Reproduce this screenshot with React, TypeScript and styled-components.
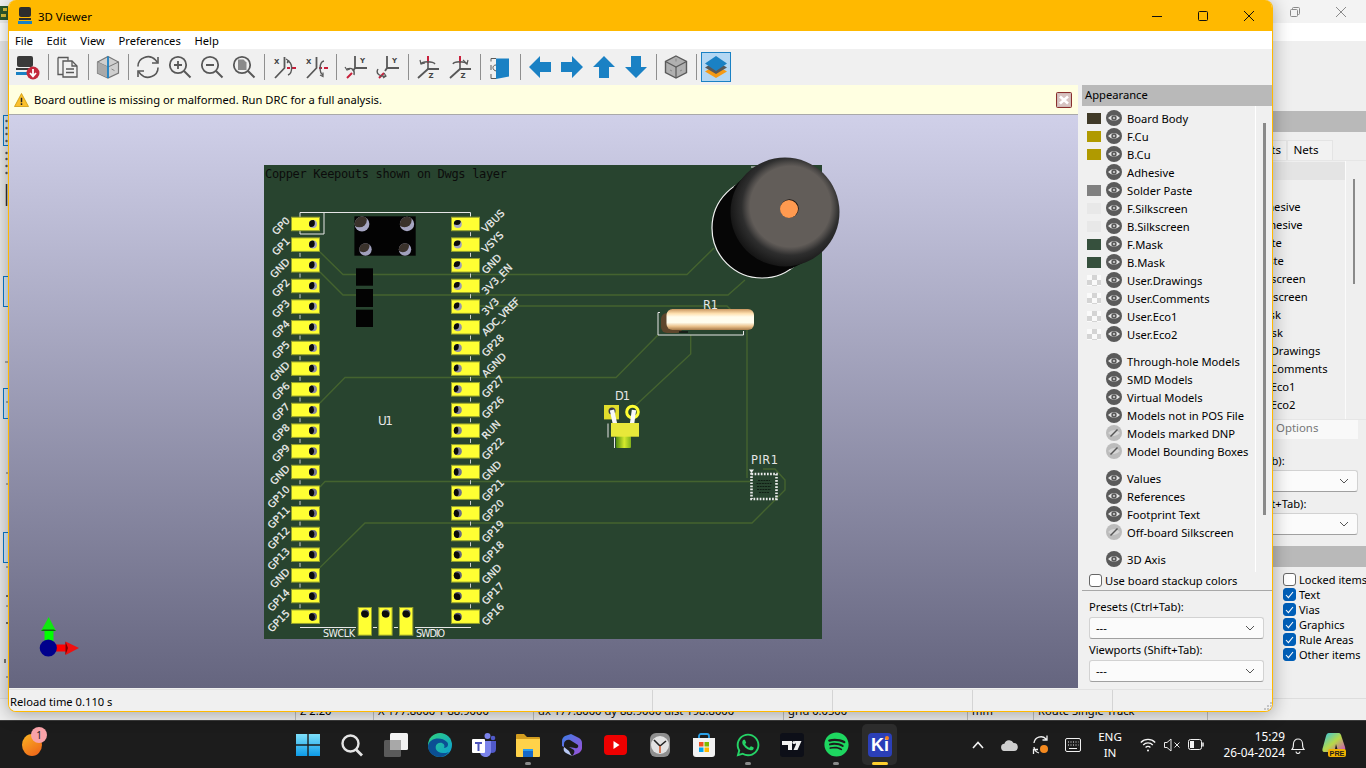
import React from "react";
import styled, { createGlobalStyle } from "styled-components";
import { FaWhatsapp, FaSpotify } from "react-icons/fa";

const UI = `"Noto Sans", "Open Sans", "Liberation Sans", sans-serif`;

const Global = createGlobalStyle`
  html, body { margin: 0; padding: 0; overflow: hidden; background: #f0f0f0; }
  * { box-sizing: border-box; }
  svg { display: block; }
`;

const Desktop = styled.div`
  position: relative;
  width: 1366px;
  height: 768px;
  display: flex;
  flex-direction: column;
  font-family: ${UI};
  font-size: 11.2px;
  color: #000;
  overflow: hidden;
`;

/* ---------- window behind ---------- */
const BackWindow = styled.div`
  height: 720px;
  display: flex;
  flex-direction: column;
  background: #efefef;
  overflow: hidden;
`;
const BackTitle = styled.div`
  height: 23px;
  flex: none;
  background: #f3f3f3;
  display: flex;
  align-items: center;
  justify-content: space-between;
`;
const BackCaps = styled.div`
  display: flex;
  align-items: center;
  gap: 36px;
  padding-right: 20px;
`;
const BackMenu = styled.div`
  height: 18px;
  flex: none;
  background: #fff;
`;
const BackBody = styled.div`
  flex: 1;
  min-height: 0;
  display: flex;
`;
const BackStrip = styled.div`
  position: relative;
  width: 28px;
  padding: 74px 0 0 3px;
  background: #e9e9e9;
`;
const StripMarks = styled.svg`
  position: absolute;
  left: 0;
  top: 0;
`;
const StripToggle = styled.div<{ $top: number }>`
  width: 30px;
  height: 31px;
  margin-top: ${(p) => p.$top}px;
  border: 1px solid #0f78c8;
  background: #d6e8f6;
`;
const BackCentre = styled.div`
  flex: 1;
`;
const BackPanel = styled.div`
  width: 200px;
  display: flex;
  flex-direction: column;
`;
const BackHeader = styled.div<{ $top: number }>`
  height: 21px;
  flex: none;
  margin-top: ${(p) => p.$top}px;
  background: #b9b9b9;
`;
const TabRow = styled.div`
  height: 20px;
  margin-top: 8px;
  padding-left: 64px;
  display: flex;
`;
const Tab = styled.div<{ $w: number; $dx: number }>`
  width: ${(p) => p.$w}px;
  height: 20px;
  border: 1px solid #e4e4e4;
  border-bottom: 0;
  background: #f2f2f2;
  font-size: 11.6px;
  line-height: 18px;
  text-align: center;
  text-indent: ${(p) => p.$dx}px;
`;
const LayerFrame = styled.div`
  height: 260px;
  display: flex;
  border: 1px solid #e6e6e6;
  border-right: 0;
  margin-left: 40px;
`;
const LayerList = styled.div`
  width: 139px;
  border-right: 1px solid #fbfbfb;
  padding-top: 1px;
`;
const LayerRow = styled.div<{ $on?: boolean }>`
  height: 18px;
  line-height: 18px;
  padding-left: 38px;
  background: ${(p) => (p.$on ? "#e4e4e4" : "transparent")};
`;
const LayerTrack = styled.div`
  flex: 1;
  padding: 18px 0 0 7px;
`;
const LayerThumb = styled.div`
  width: 2px;
  height: 105px;
  background: #8a8a8a;
`;
const OptionsRow = styled.div`
  height: 19px;
  margin: 0 8px 0 106px;
  background: #f9f9f9;
  color: #777;
  line-height: 16px;
  font-size: 11.4px;
  padding-left: 4px;
`;
const BackLabel = styled.div<{ $x: number; $top: number }>`
  height: 16px;
  margin-top: ${(p) => p.$top}px;
  margin-left: ${(p) => p.$x}px;
  line-height: 16px;
  white-space: nowrap;
`;
const SelectBox = styled.div<{ $back?: boolean }>`
  height: 22px;
  background: #fbfbfb;
  border: 1px solid #d2d2d2;
  border-bottom-color: #a0a0a0;
  border-radius: 3px;
  margin: ${(p) => (p.$back ? "1px 8px 0 14px" : "2px 0 0 0")};
  padding: 0 8px 0 6px;
  display: flex;
  align-items: center;
  justify-content: ${(p) => (p.$back ? "flex-end" : "space-between")};
  line-height: 20px;
`;
const CheckGrid = styled.div`
  padding: 5px 0 0 117px;
`;
const CheckRow = styled.div`
  height: 15px;
  display: flex;
  align-items: center;
  gap: 3px;
  font-size: 11px;
  white-space: nowrap;
`;
const Check = styled.div<{ $on?: boolean }>`
  width: 13px;
  height: 13px;
  flex: none;
  border-radius: 3px;
  border: 1px solid ${(p) => (p.$on ? "#005fb8" : "#666")};
  background: ${(p) => (p.$on ? "#005fb8" : "#fff")};
  display: flex;
  align-items: center;
  justify-content: center;
`;
const BackStatus = styled.div`
  height: 22px;
  flex: none;
  display: flex;
  background: #efefef;
  border-top: 1px solid #ddd;
`;
const BackCell = styled.div<{ $w: number }>`
  width: ${(p) => p.$w}px;
  flex: none;
  border-right: 1px solid #bdbdbd;
  padding-left: 4px;
  line-height: 23px;
  white-space: nowrap;
  overflow: hidden;
`;

/* ---------- 3D viewer window ---------- */
const Win = styled.div`
  position: absolute;
  left: 8px;
  top: 0;
  width: 1265px;
  height: 712px;
  display: flex;
  flex-direction: column;
  border: 1px solid #ffb900;
  border-width: 0 1px 1px 1px;
  border-radius: 8px;
  overflow: hidden;
  background: #f0f0f0;
  box-shadow: 0 2px 18px rgba(0, 0, 0, 0.32);
`;
const TitleBar = styled.div`
  height: 31px;
  flex: none;
  background: #ffb900;
  display: flex;
  align-items: center;
  padding-left: 8px;
`;
const TitleText = styled.div`
  margin-left: 5px;
  padding-top: 1px;
  font-size: 11.4px;
  flex: 1;
`;
const Caption = styled.div`
  width: 46px;
  height: 31px;
  display: flex;
  align-items: center;
  justify-content: center;
`;
const CaptionRow = styled.div`
  display: flex;
`;
const MenuBar = styled.div`
  height: 18px;
  flex: none;
  background: #fff;
  padding-top: 1px;
  display: flex;
  align-items: center;
`;
const MenuItem = styled.div`
  padding: 0 7.7px 0 6px;
  line-height: 17px;
`;
const ToolBar = styled.div`
  height: 36px;
  flex: none;
  background: #f0f0f0;
  padding-left: 3px;
  display: flex;
  align-items: center;
`;
const ToolBtn = styled.div<{ $on?: boolean }>`
  width: 30px;
  height: 30px;
  margin: 0 1px;
  display: flex;
  align-items: center;
  justify-content: center;
  border: 1px solid ${(p) => (p.$on ? "#1a81c4" : "transparent")};
  background: ${(p) => (p.$on ? "#b3d7f3" : "transparent")};
`;
const ToolSep = styled.div`
  width: 8px;
  height: 26px;
  flex: none;
  display: flex;
  justify-content: center;
  &::before {
    content: "";
    width: 1px;
    height: 100%;
    background: #8f8f8f;
  }
`;
const Body = styled.div`
  flex: 1;
  min-height: 0;
  display: flex;
`;
const Main = styled.div`
  width: 1069px;
  display: flex;
  flex-direction: column;
  padding-bottom: 1px;
`;
const InfoBar = styled.div`
  height: 30px;
  flex: none;
  background: #ffffe1;
  border-bottom: 1px solid #a9a9a9;
  display: flex;
  align-items: center;
  padding: 0 6px 0 5px;
  gap: 5px;
`;
const InfoText = styled.div`
  flex: 1;
`;
const Canvas = styled.div`
  flex: 1;
  min-height: 0;
  background: linear-gradient(#d0d0e9, #65657f);
`;
const Panel = styled.div`
  width: 190px;
  margin-left: 4px;
  display: flex;
  flex-direction: column;
`;
const PanelHead = styled.div`
  height: 21px;
  flex: none;
  background: #b9b9b9;
  padding-left: 3px;
  line-height: 20px;
`;
const PanelScroll = styled.div`
  flex: 1;
  min-height: 0;
  display: flex;
`;
const RowList = styled.div`
  width: 174px;
  padding-top: 3px;
  border-right: 1px solid #fff;
  overflow: hidden;
`;
const RowGap = styled.div`
  height: 9px;
`;
const Row = styled.div`
  height: 18px;
  display: flex;
  align-items: center;
  padding-left: 5px;
  white-space: nowrap;
`;
const Swatch = styled.div<{ $fill?: string; $checker?: boolean }>`
  width: 14px;
  height: 11px;
  flex: none;
  margin-right: 5px;
  background: ${(p) =>
    p.$checker
      ? "repeating-conic-gradient(#d4d4d4 0 25%, #fafafa 0 50%) 0 0 / 10px 10px"
      : p.$fill || "transparent"};
`;
const RowLabel = styled.div`
  margin-left: 5px;
`;
const ScrollTrack = styled.div`
  flex: 1;
  padding: 17px 0 0 7px;
`;
const ScrollThumb = styled.div`
  width: 2.5px;
  height: 392px;
  background: #8a8a8a;
`;
const StackRow = styled.div`
  height: 19px;
  flex: none;
  border-bottom: 1px solid #a8a8a8;
  display: flex;
  align-items: center;
  gap: 3px;
  padding: 0 0 1px 7px;
`;
const Footer = styled.div`
  height: 98px;
  flex: none;
  padding: 8px 8px 0 7px;
`;
const FootLabel = styled.div<{ $top?: number }>`
  height: 16px;
  margin-top: ${(p) => p.$top || 0}px;
  line-height: 16px;
`;
const StatusBar = styled.div`
  height: 22px;
  flex: none;
  display: flex;
  background: #f0f0f0;
  border-top: 1px solid #e2e2e2;
`;
const StatusCell = styled.div<{ $w: number }>`
  width: ${(p) => p.$w}px;
  flex: none;
  border-right: 1px solid #d4d4d4;
  padding-left: 1px;
  line-height: 24px;
`;
const Grip = styled.svg`
  position: absolute;
  right: 0;
  bottom: 1px;
`;

/* ---------- taskbar ---------- */
const TaskBar = styled.div`
  height: 48px;
  flex: none;
  background: #1c1c1c;
  border-top: 1px solid #3c3c3c;
  display: flex;
  align-items: center;
  color: #fff;
`;
const WidgetSlot = styled.div`
  position: relative;
  width: 286px;
  height: 47px;
  flex: none;
  padding: 13px 0 0 22px;
`;
const Badge = styled.div`
  position: absolute;
  left: 31px;
  top: 6px;
  width: 16px;
  height: 16px;
  border-radius: 50%;
  background: #f9a2a8;
  color: #1c1c1c;
  font-size: 10px;
  line-height: 16px;
  text-align: center;
`;
const AppBtn = styled.div<{ $active?: boolean }>`
  position: relative;
  width: 44px;
  height: 47px;
  flex: none;
  display: flex;
  align-items: center;
  justify-content: center;
  &::before {
    content: "";
    display: ${(p) => (p.$active ? "block" : "none")};
    position: absolute;
    left: 4px;
    top: 3px;
    width: 35px;
    height: 41px;
    border-radius: 5px;
    background: #2c2c2c;
  }
  & > * {
    position: relative;
  }
`;
const RunDot = styled.div<{ $active?: boolean }>`
  position: absolute !important;
  bottom: 3px;
  left: 50%;
  transform: translateX(-50%);
  width: ${(p) => (p.$active ? 16 : 6)}px;
  height: 3px;
  border-radius: 2px;
  background: ${(p) => (p.$active ? "#ffd02e" : "#8a8a8a")};
`;
const KiTile = styled.div`
  width: 24px;
  height: 24px;
  border-radius: 4px;
  background: #2b3fb8;
  color: #fff;
  font: 700 18px/24px "Liberation Sans", sans-serif;
  text-align: center;
  &::after {
    content: "";
    position: absolute;
    right: 3px;
    top: 3px;
    width: 4px;
    height: 4px;
    border-radius: 50%;
    background: #f58220;
  }
`;
const Tray = styled.div`
  margin-left: auto;
  display: flex;
  align-items: center;
  padding-right: 10px;
`;
const TrayCell = styled.div<{ $w: number }>`
  width: ${(p) => p.$w}px;
  height: 47px;
  flex: none;
  display: flex;
  align-items: center;
  justify-content: center;
`;
const TrayLang = styled.div`
  width: 40px;
  margin: 0 6px 0 2px;
  text-align: center;
  font-size: 11.6px;
  line-height: 16px;
`;
const TrayClock = styled.div`
  width: 77px;
  padding-bottom: 2px;
  text-align: right;
  font-size: 11.8px;
  line-height: 16px;
`;

/* ---------- icons ---------- */
const GR = "#585858";
const BL = "#1a81c4";
const RD = "#c8203c";

const TitleIcon = () => (
  <svg width="16" height="20" viewBox="0 0 16 20">
    <rect x="2" y="1" width="12" height="10" rx="2" fill="#2d2d2d" />
    <rect x="2" y="12" width="12" height="2" fill="#2d2d2d" />
    <rect x="1" y="15" width="14" height="3" fill="#1a81c4" />
  </svg>
);
const ExportIcon = () => (
  <svg width="26" height="26" viewBox="0 0 26 26">
    <rect x="2" y="2" width="16" height="11" rx="2" fill="#3a3a3a" />
    <rect x="1" y="14" width="17" height="2" fill="#3a3a3a" />
    <rect x="1" y="18" width="17" height="3" fill={BL} />
    <circle cx="18" cy="19" r="6.5" fill="#c4283c" />
    <path d="M18 15v7M15 19l3 3.4 3-3.4" stroke="#fff" strokeWidth="1.8" fill="none" />
  </svg>
);
const CopyIcon = () => (
  <svg width="24" height="24" viewBox="0 0 24 24" fill="none" stroke={GR} strokeWidth="1.3">
    <path d="M2 2.5h10v3M2 2.5v17h5" />
    <path fill="#f0f0f0" d="M7 6h9l5 5v11H7z" />
    <path d="M16 6v5h5M10 14h8M10 17.5h8" />
  </svg>
);
const BoxIcon = () => (
  <svg width="24" height="24" viewBox="0 0 24 24">
    <path d="M12 1.5l10.5 5.5v11L12 23 1.5 18V7z" fill="#cfcfcf" stroke="#777" strokeWidth="1.2" />
    <path d="M1.5 7L12 12 22.5 7" fill="none" stroke="#777" />
    <path d="M1.5 7L12 12v11L1.5 18z" fill="#a9a9a9" />
    <path d="M12 1.5V23" stroke={BL} strokeWidth="1.8" />
    <path d="M15.5 14l3 1.6" stroke="#888" />
  </svg>
);
const RefreshIcon = () => (
  <svg width="24" height="24" viewBox="0 0 24 24" fill="none" stroke={GR} strokeWidth="1.6">
    <path d="M2 11.5A10 9.5 0 0 1 19.5 5l2 2.5" />
    <path d="M22 2v6h-6" />
    <path d="M22 12.5A10 9.5 0 0 1 4.5 19l-2-2.5" />
    <path d="M2 22v-6h6" />
  </svg>
);
const Lens = ({ children }: { children?: React.ReactNode }) => (
  <svg width="24" height="24" viewBox="0 0 24 24" fill="none" stroke={GR} strokeWidth="1.8">
    <circle cx="10" cy="10" r="8.2" />
    <path d="M16 16l6.5 6.5" strokeWidth="2" />
    {children}
  </svg>
);
const ZoomInIcon = () => (
  <Lens>
    <path d="M6 10h8M10 6v8" />
  </Lens>
);
const ZoomOutIcon = () => (
  <Lens>
    <path d="M6 10h8" />
  </Lens>
);
const ZoomFitIcon = () => (
  <Lens>
    <path d="M6 4.5h5.5l3 3V15H6z" fill="#8a8a8a" stroke="none" />
  </Lens>
);
const AxisLabel = ({ x, y, t }: { x: number; y: number; t: string }) => (
  <text x={x} y={y} fontFamily="DejaVu Sans, sans-serif" fontSize="7" fontWeight="700" fill="#444">
    {t}
  </text>
);
const RotXIcon = ({ flip }: { flip?: boolean }) => (
  <svg width="24" height="24" viewBox="0 0 24 24" fill="none">
    <AxisLabel x={2} y={9} t="X" />
    <path d="M12.5 2v11L3 23" stroke={GR} strokeWidth="1.8" />
    <path d="M15 13h3M20 13h4" stroke={RD} strokeWidth="1.8" />
    <path
      d={flip ? "M20 6C15 7 15 18 19 20" : "M15 6c6 1 6 12 1 14"}
      stroke={GR}
      strokeWidth="1.4"
    />
    <path d={flip ? "M16 20l3 1.5V17.5" : "M14 4l3 2-2 2"} stroke={GR} strokeWidth="1.2" />
  </svg>
);
const RotYIcon = ({ flip }: { flip?: boolean }) => (
  <svg width="24" height="24" viewBox="0 0 24 24" fill="none">
    <AxisLabel x={16} y={8} t="Y" />
    <path d="M11 1v12h12" stroke={GR} strokeWidth="1.8" />
    <path d="M11 13l-2 3" stroke={GR} strokeWidth="1.8" />
    <path d="M8 18l-5 5" stroke={RD} strokeWidth="2" />
    <path
      d={flip ? "M2 14c-3 5 3 8 8 7" : "M3 14c5-2 8 1 7 6"}
      stroke={GR}
      strokeWidth="1.4"
    />
    <path d={flip ? "M8 18l2 3-3 2" : "M1 12l2 3 3-1"} stroke={GR} strokeWidth="1.2" />
  </svg>
);
const RotZIcon = ({ flip }: { flip?: boolean }) => (
  <svg width="24" height="24" viewBox="0 0 24 24" fill="none">
    <path d="M12 1v7" stroke={RD} strokeWidth="2" />
    <path d="M5 9c1-3 12-3 14 0" stroke={GR} strokeWidth="1.4" />
    <path d={flip ? "M15 5l4 4 1-4" : "M4 5l1 4 4-1"} stroke={GR} strokeWidth="1.2" />
    <path d="M12 8v6" stroke={GR} strokeWidth="1.6" />
    <path d="M2 23l10-9h11" stroke={GR} strokeWidth="1.8" />
    <AxisLabel x={12.5} y={22.5} t="Z" />
  </svg>
);
const OrthoIcon = () => (
  <svg width="24" height="24" viewBox="0 0 24 24" fill="none">
    <path d="M3 3.5h5M3 3.5v3M3 10v5M3 19v4.5h5" stroke={GR} />
    <path d="M8 10c-3 0-4 3-2 5l2 1" stroke={GR} />
    <path d="M8 3.5h13v18L8 24z" fill={BL} />
  </svg>
);
const Arrow = ({ r }: { r: number }) => (
  <svg width="24" height="24" viewBox="0 0 24 24">
    <path transform={`rotate(${r} 12 12)`} d="M12 1L23 12H17V23H7V12H1z" fill={BL} />
  </svg>
);
const CubeIcon = () => (
  <svg width="24" height="24" viewBox="0 0 24 24">
    <path d="M12 1l10.5 5.5v11L12 23 1.5 17.5v-11z" fill="#b0b0b0" stroke="#5a5a5a" strokeWidth="1.4" />
    <path d="M1.5 6.5L12 12l10.5-5.5" fill="none" stroke="#5a5a5a" strokeWidth="1.2" />
    <path d="M12 12v11" stroke="#5a5a5a" strokeWidth="1.2" />
    <path d="M12 3.5v3M6 15l2 1M18 15l-2 1" stroke="#888" />
  </svg>
);
const LayersIcon = () => (
  <svg width="24" height="24" viewBox="0 0 24 24">
    <path d="M12 10l11 6.5L12 23 1 16.5z" fill="#f59a14" />
    <path d="M12 6l11 6.5L12 19 1 12.5z" fill="#585858" />
    <path d="M12 1l11 7.5L12 16 1 8.5z" fill={BL} />
  </svg>
);
const Eye = ({ off }: { off?: boolean }) => (
  <svg width="16" height="16" viewBox="0 0 16 16">
    <circle cx="8" cy="8" r="8" fill={off ? "#bcbcbc" : "#5a5a5a"} />
    <path d="M2 8Q8 2.2 14 8 8 13.8 2 8z" fill={off ? "#d6d6d6" : "#e6e6e6"} />
    {off ? (
      <path d="M4.5 11.5l7-7" stroke="#555" strokeWidth="1.5" />
    ) : (
      <>
        <circle cx="8" cy="8" r="2.7" fill="#5a5a5a" />
        <circle cx="8" cy="8" r="1.1" fill="#cfcfcf" />
      </>
    )}
  </svg>
);
const Chevron = () => (
  <svg width="10" height="6" viewBox="0 0 10 6" fill="none" stroke="#555">
    <path d="M1 1l4 4 4-4" />
  </svg>
);
const CheckMark = () => (
  <svg width="9" height="8" viewBox="0 0 9 8" fill="none" stroke="#fff" strokeWidth="1.1">
    <path d="M1 4l2.4 2.6L8 1" />
  </svg>
);

/* ---------- 3D scene ---------- */
const LEFT = ["GP0","GP1","GND","GP2","GP3","GP4","GP5","GND","GP6","GP7","GP8","GP9","GND","GP10","GP11","GP12","GP13","GND","GP14","GP15"];
const RIGHT = ["VBUS","VSYS","GND","3V3_EN","3V3","ADC_VREF","GP28","AGND","GP27","GP26","RUN","GP22","GND","GP21","GP20","GP19","GP18","GND","GP17","GP16"];
const PITCH = 20.67;
const rowY = (i: number) => 216.7 + i * PITCH;
const wallShade = (y: number) => {
  const t = Math.min(1, Math.max(0, (y - 165) / 474));
  const c = (a: number, b: number) => Math.round(a + (b - a) * t);
  return `rgb(${c(178, 84)},${c(178, 84)},${c(206, 108)})`;
};
const Hole = ({
  id, x, y, dx, dy, r = 4, ink = "#0b0b0b",
}: { id: string; x: number; y: number; dx: number; dy: number; r?: number; ink?: string }) => (
  <g>
    <clipPath id={id}>
      <circle cx={x} cy={y} r={r} />
    </clipPath>
    <circle cx={x} cy={y} r={r} fill={wallShade(y)} />
    <circle cx={x + dx} cy={y + dy} r={r} fill={ink} clipPath={`url(#${id})`} />
  </g>
);
const Pad = ({ x, y, w, h }: { x: number; y: number; w: number; h: number }) => (
  <rect x={x + 0.5} y={y + 0.5} width={w - 1} height={h - 1} fill="#ffff33" stroke="#94a02e" />
);
const SILK = "#e6e6e6";
const TRACE = "#44632f";
const TRACES = [
  "320,252 343,274.5 687,274.5 714,248",
  "320,272 343,295 728,295 745,280",
  "480,306 727,306 747,326 747,478",
  "320,403 345,377.5 616,377.5 658,335",
  "636,405 690.7,354 690.7,335",
  "320,487 325,481.5 750,481.5",
  "320,567.5 365,523 752,523 785,490 785,480 775,469 763,469",
];
const labelFont = "DejaVu Sans, sans-serif";
const LABEL = "#f0f0f0";

const Scene = () => (
  <svg width="1069" height="573" viewBox="9 115 1069 573">
    <defs>
      <radialGradient id="capTop" cx="0.55" cy="0.45" r="0.56">
        <stop offset="0" stopColor="#625d59" />
        <stop offset="0.66" stopColor="#625d59" />
        <stop offset="0.72" stopColor="#4d4a48" />
        <stop offset="0.8" stopColor="#2e2e2e" />
        <stop offset="1" stopColor="#161616" />
      </radialGradient>
      <linearGradient id="resBody" x1="0" y1="0" x2="0" y2="1">
        <stop offset="0" stopColor="#c9965f" />
        <stop offset="0.22" stopColor="#ffe2b2" />
        <stop offset="0.38" stopColor="#fffdee" />
        <stop offset="0.64" stopColor="#fffdee" />
        <stop offset="0.82" stopColor="#ecc48f" />
        <stop offset="1" stopColor="#a87a48" />
      </linearGradient>
      <linearGradient id="ledFoot" x1="0" y1="0" x2="1" y2="0">
        <stop offset="0" stopColor="#4e8a10" />
        <stop offset="0.55" stopColor="#d6ea2c" />
        <stop offset="1" stopColor="#7fb01c" />
      </linearGradient>
    </defs>

    <rect x="264" y="165" width="558" height="474" fill="#28442f" />
    <text x="265" y="177.5" fontFamily="DejaVu Sans Mono, monospace" fontSize="12" fill="#0c0c0c" textLength="242">
      Copper Keepouts shown on Dwgs layer
    </text>

    {TRACES.map((t) => (
      <polyline key={t} points={t} fill="none" stroke={TRACE} strokeWidth="1.4" />
    ))}

    <path d="M300 230v-17.5h170.5v4" fill="none" stroke={SILK} strokeWidth="1" />
    <path d="M324 212.5v21.5h-24v-4" fill="none" stroke={SILK} strokeWidth="1" />
    {LEFT.slice(0, 19).map((_, i) => (
      <g key={i} stroke="#cfcfcf">
        {i > 0 && <path d={`M300 ${rowY(i) + 15.5}v4`} />}
        <path d={`M470.5 ${rowY(i) + 15.5}v4`} />
      </g>
    ))}
    <path d="M300 627.5h56M415 627.5h56M373 627.5h4M394 627.5h4" stroke={SILK} />

    {LEFT.map((n, i) => {
      const y = rowY(i);
      const t = i / 19;
      return (
        <g key={`l${i}`}>
          <Pad x={291} y={y} w={29} h={14.5} />
          <Hole id={`hl${i}`} x={313} y={y + 7.2} dx={-2.1 - Math.sin(t * Math.PI) * 0.9} dy={-1 + 1.6 * t} />
          <text
            x={290.5}
            y={y + 4.5}
            transform={`rotate(-45 290.5 ${y + 4.5})`}
            textAnchor="end"
            fontFamily={labelFont}
            fontSize="10"
            fill={LABEL}
            stroke={LABEL}
            strokeWidth="0.2"
          >
            {n}
          </text>
        </g>
      );
    })}
    {RIGHT.map((n, i) => {
      const y = rowY(i);
      const t = i / 19;
      return (
        <g key={`r${i}`}>
          <Pad x={451} y={y} w={29} h={14.5} />
          <Hole
            id={`hr${i}`}
            x={457.8}
            y={y + 7.2}
            dx={-1 - Math.sin(t * Math.PI) * 2.4}
            dy={-2.8 + 4.4 * t}
          />
          <text
            x={486}
            y={y + 16.5}
            transform={`rotate(-45 486 ${y + 16.5})`}
            fontFamily={labelFont}
            fontSize="10"
            fill={LABEL}
            stroke={LABEL}
            strokeWidth="0.2"
            textLength={n === "ADC_VREF" ? 49 : undefined}
          >
            {n}
          </text>
        </g>
      );
    })}

    {[357.7, 378.3, 399].map((x, i) => (
      <g key={x}>
        <Pad x={x} y={607} w={14.3} h={28.7} />
        <Hole id={`sw${i}`} x={x + 7.5} y={613.5} dx={-0.6} dy={1.2} />
      </g>
    ))}
    <text x="323" y="636.5" fontFamily={labelFont} fontSize="9.6" fill={LABEL} textLength="32">SWCLK</text>
    <text x="416" y="636.5" fontFamily={labelFont} fontSize="9.6" fill={LABEL} textLength="29">SWDIO</text>
    <text x="378" y="424.5" fontFamily={labelFont} fontSize="12" fill="#e6e6e6" textLength="15">U1</text>

    <rect x="354.4" y="216.3" width="61.3" height="39.4" fill="#030303" />
    {[
      [362, 224, 7.4],
      [407, 224, 7.2],
      [365.5, 249.5, 6.2],
      [405, 249.5, 6.2],
    ].map(([x, y, r], i) => (
      <Hole key={i} id={`kh${i}`} x={x} y={y} r={r} dx={-r * 0.35} dy={-r * 0.55} ink="#3a322b" />
    ))}
    <rect x="356" y="268.3" width="17" height="17.4" fill="#030303" />
    <rect x="356" y="289" width="17" height="18" fill="#030303" />
    <rect x="356" y="309.7" width="17" height="17.3" fill="#030303" />

    {/* R1 */}
    <text x="703" y="309" fontFamily={labelFont} fontSize="11.4" fill="#e6e6e6" textLength="15">R1</text>
    <path d="M660 312.5h-2v22.5h85.5v-4" fill="none" stroke={SILK} />
    <rect x="661" y="313" width="22" height="20" rx="6" fill="#5e462c" />
    <path d="M679 332h9" stroke="#111" strokeWidth="1.4" />
    <rect x="666.5" y="309" width="87.5" height="21" rx="6" fill="url(#resBody)" />

    {/* D1 */}
    <text x="615" y="400" fontFamily={labelFont} fontSize="11.4" fill="#e6e6e6" textLength="15">D1</text>
    <rect x="604" y="405" width="15" height="14.4" fill="#e2de2c" />
    <circle cx="632.5" cy="412" r="5.8" fill="#28442f" stroke="#ffff33" strokeWidth="3" />
    <circle cx="612" cy="411" r="3.5" fill="#3a3a4a" />
    <path d="M612 410l3 14M634 410l-2 14" stroke="#f8f8f8" strokeWidth="4.4" />
    <path d="M608 423.5v14M614.5 437.5v10.5" stroke={SILK} fill="none" />
    <rect x="616" y="436" width="15" height="12" rx="1" fill="url(#ledFoot)" />
    <rect x="611" y="423" width="28" height="13.7" fill="#e8e83a" />

    {/* PIR1 */}
    <text x="751" y="464" fontFamily={labelFont} fontSize="11.4" fill="#e6e6e6" textLength="27">PIR1</text>
    <path d="M749 469.5h5l-2.5 3.5z" fill="#f4f4f4" />
    <rect x="751.5" y="474" width="25" height="25" fill="none" stroke="#ececec" strokeWidth="2.6" strokeDasharray="1.7 1.4" />
    <path d="M758 480.5h12M756.5 483.5h15M757 486.5h14M757 489.5h14M759 492.5h10" stroke="#0d1a12" strokeWidth="0.9" strokeDasharray="2 0.7" />

    {/* buzzer */}
    <path d="M751 167h11" stroke={SILK} />
    <circle cx="762" cy="228" r="50" fill="#060606" stroke="#f2f2f2" strokeWidth="1.2" />
    <polygon points="790.6,269 815.8,256.3 754.2,167.7 733.4,187" fill="#060606" />
    <circle cx="785" cy="212" r="54.5" fill="url(#capTop)" />
    <circle cx="789.5" cy="208.5" r="9.2" fill="#1c1410" />
    <circle cx="789" cy="209" r="9" fill="#ff9a50" />

    {/* axis */}
    <path d="M56 644.5h11v7H56z" fill="#f00" />
    <path d="M65.5 641.5L79 648 65.5 655z" fill="#f01010" />
    <path d="M65.5 641.5L68 648 65.5 655z" fill="#7a0000" />
    <path d="M44.5 630h9v11h-9z" fill="#0f0" />
    <path d="M48.7 617L56 631H41z" fill="#10e810" />
    <path d="M41 631h15l-2-1.6H43z" fill="#0a6a0a" />
    <circle cx="48.3" cy="648" r="8.6" fill="#00008c" />
  </svg>
);

/* ---------- taskbar drawings ---------- */
const Icons: Record<string, React.ReactNode> = {
  win: (
    <svg width="24" height="24" viewBox="0 0 24 24">
      <defs>
        <linearGradient id="w1" x1="0" y1="0" x2="0" y2="1">
          <stop offset="0" stopColor="#7ee0fa" />
          <stop offset="1" stopColor="#0d9be8" />
        </linearGradient>
      </defs>
      <path d="M0 1h11.3v10.3H0zM12.7 1H24v10.3H12.7zM0 12.7h11.3V23H0zM12.7 12.7H24V23H12.7z" fill="url(#w1)" />
    </svg>
  ),
  search: (
    <svg width="24" height="24" viewBox="0 0 24 24" fill="none" stroke="#e4e4e4">
      <circle cx="10.5" cy="10.5" r="8" strokeWidth="2.4" />
      <path d="M16 16.5l6 6" strokeWidth="2.8" />
    </svg>
  ),
  task: (
    <svg width="24" height="24" viewBox="0 0 24 24">
      <rect x="0" y="7" width="17" height="17" rx="1.5" fill="#5a5a5a" />
      <rect x="6" y="0" width="18" height="17" rx="1.5" fill="#f2f2f2" />
      <rect x="6" y="7" width="11" height="10" fill="#a8a8a8" />
    </svg>
  ),
  edge: (
    <svg width="24" height="24" viewBox="0 0 24 24">
      <defs>
        <linearGradient id="e1" x1="0" y1="0" x2="1" y2="1">
          <stop offset="0" stopColor="#2fd27c" />
          <stop offset="1" stopColor="#0a9bd8" />
        </linearGradient>
      </defs>
      <circle cx="12" cy="12" r="12" fill="url(#e1)" />
      <path d="M0 13C1 5 13 3 19 9c2 2 1 6-3 6 2-4-3-7-7-4-3 3-1 9 6 9 2 0 4 0 6-1-3 4-7 5-9 5C6 24 0 20 0 13z" fill="#0b4f94" />
    </svg>
  ),
  teams: (
    <svg width="24" height="24" viewBox="0 0 24 24">
      <circle cx="15.5" cy="3" r="3" fill="#7b83eb" />
      <circle cx="21" cy="5" r="2.3" fill="#5059c9" />
      <path d="M17 8h7v8c0 3-2 4-4 4-1 0-3-1-3-2z" fill="#5059c9" />
      <path d="M8 8h11v11c0 3-3 5-5 5-3 0-6-2-6-5z" fill="#7b83eb" />
      <rect x="0" y="6" width="13" height="14" rx="1" fill="#fff" />
      <path d="M3 9h7v2H7.5v7h-2v-7H3z" fill="#4b53bc" />
    </svg>
  ),
  files: (
    <svg width="24" height="24" viewBox="0 0 24 24">
      <path d="M0 2a1 1 0 0 1 1-1h7l3 3h12a1 1 0 0 1 1 1v3H0z" fill="#d39d1f" />
      <path d="M0 6h24v17a1 1 0 0 1-1 1H1a1 1 0 0 1-1-1z" fill="#ffd24a" />
      <rect x="7" y="16" width="10" height="8" fill="#1668c8" />
      <rect x="7" y="16" width="10" height="2" fill="#2a9df0" />
    </svg>
  ),
  copilot: (
    <svg width="24" height="24" viewBox="0 0 24 24">
      <defs>
        <linearGradient id="c1" x1="0" y1="0" x2="1" y2="1">
          <stop offset="0" stopColor="#3c7ce4" />
          <stop offset="1" stopColor="#a050d8" />
        </linearGradient>
      </defs>
      <path d="M11 1l8 4c2 1 3 3 3 5v5c0 2-1 3-3 5l-7 3c2-2 3-4 2-6l-5-3 6 1c2 1 4-1 3-3L10 7C7 6 4 8 4 11v3L2 13V8c0-2 1-4 3-5z" fill="url(#c1)" />
      <path d="M4 14l5 4c1 2 2 4 3 5l-6-3c-2-1-3-3-2-6z" fill="#b8c8f4" />
    </svg>
  ),
  yt: (
    <svg width="24" height="24" viewBox="0 0 24 24">
      <rect x="0" y="2" width="23" height="20" rx="4" fill="#ee0000" />
      <path d="M9.5 8l6 4-6 4z" fill="#fff" />
    </svg>
  ),
  clock: (
    <svg width="24" height="24" viewBox="0 0 24 24">
      <rect x="2" y="0" width="20" height="24" rx="6" fill="#8e8e8e" />
      <circle cx="12" cy="12" r="9" fill="#e2e2e2" />
      <path d="M12 13L6 7M12 13l6-5" stroke="#222" strokeWidth="1.6" />
      <path d="M12 13v7" stroke="#d05020" strokeWidth="1.4" />
    </svg>
  ),
  store: (
    <svg width="24" height="24" viewBox="0 0 24 24">
      <path d="M7 5V3a2 2 0 0 1 2-2h6a2 2 0 0 1 2 2v2" fill="none" stroke="#2aa0e8" strokeWidth="1.8" />
      <path d="M1 5h22v16a3 3 0 0 1-3 3H4a3 3 0 0 1-3-3z" fill="#f2f2f2" />
      <path d="M7 9h4.5v4.5H7z" fill="#f25022" />
      <path d="M12.5 9H17v4.5h-4.5z" fill="#7fba00" />
      <path d="M7 14.5h4.5V19H7z" fill="#00a4ef" />
      <path d="M12.5 14.5H17V19h-4.5z" fill="#ffb900" />
    </svg>
  ),
  tv: (
    <svg width="24" height="24" viewBox="0 0 24 24">
      <rect x="0" y="0" width="24" height="24" rx="3" fill="#0d0f18" />
      <path d="M2 8h10v9H8v-5H2zM14.5 8h7l-4 9h-4l2.5-5.5z" fill="#f2f2f2" />
      <circle cx="14" cy="9.5" r="1.6" fill="#f2f2f2" />
    </svg>
  ),
};

const TOOLS: (React.ReactNode | null)[] = [
  <ExportIcon />, null,
  <CopyIcon />, null,
  <BoxIcon />, null,
  <RefreshIcon />, <ZoomInIcon />, <ZoomOutIcon />, <ZoomFitIcon />, null,
  <RotXIcon />, <RotXIcon flip />, null,
  <RotYIcon />, <RotYIcon flip />, null,
  <RotZIcon />, <RotZIcon flip />, null,
  <OrthoIcon />, null,
  <Arrow r={-90} />, <Arrow r={90} />, <Arrow r={0} />, <Arrow r={180} />, null,
  <CubeIcon />, null,
];

type RowDef = { l: string; c?: string; ch?: boolean; off?: boolean };
const ROWS: RowDef[][] = [
  [
    { l: "Board Body", c: "#403a28" },
    { l: "F.Cu", c: "#b09a00" },
    { l: "B.Cu", c: "#b09a00" },
    { l: "Adhesive" },
    { l: "Solder Paste", c: "#808080" },
    { l: "F.Silkscreen", c: "#e8e8e8" },
    { l: "B.Silkscreen", c: "#e8e8e8" },
    { l: "F.Mask", c: "#36503d" },
    { l: "B.Mask", c: "#36503d" },
    { l: "User.Drawings", ch: true },
    { l: "User.Comments", ch: true },
    { l: "User.Eco1", ch: true },
    { l: "User.Eco2", ch: true },
  ],
  [
    { l: "Through-hole Models" },
    { l: "SMD Models" },
    { l: "Virtual Models" },
    { l: "Models not in POS File" },
    { l: "Models marked DNP", off: true },
    { l: "Model Bounding Boxes", off: true },
  ],
  [
    { l: "Values" },
    { l: "References" },
    { l: "Footprint Text" },
    { l: "Off-board Silkscreen", off: true },
  ],
  [{ l: "3D Axis" }],
];
const BACK_LAYERS = ["F.Cu","B.Cu","F.Adhesive","B.Adhesive","F.Paste","B.Paste","F.Silkscreen","B.Silkscreen","F.Mask","B.Mask","User.Drawings","User.Comments","User.Eco1","User.Eco2"];
const BACK_CHECKS: [string, boolean][] = [["Locked items",false],["Text",true],["Vias",true],["Graphics",true],["Rule Areas",true],["Other items",true]];
const BACK_STATUS: [number, string][] = [
  [296, ""],
  [78, "Z 2.20"],
  [160, "X 177.8000  Y 88.9000"],
  [250, "dx 177.8000  dy 88.9000  dist 198.8000"],
  [184, "grid 0.0500"],
  [66, "mm"],
  [174, "Route Single Track"],
];
const APPS: { k: React.ReactNode; dot?: boolean }[] = [
  { k: Icons.win },
  { k: Icons.search },
  { k: Icons.task },
  { k: Icons.edge },
  { k: Icons.teams },
  { k: Icons.files, dot: true },
  { k: Icons.copilot },
  { k: Icons.yt },
  { k: Icons.clock },
  { k: Icons.store },
  { k: <FaWhatsapp size={26} color="#25d366" />, dot: true },
  { k: Icons.tv },
  { k: <FaSpotify size={25} color="#1ed760" />, dot: true },
];

export default function App() {
  return (
    <Desktop>
      <Global />
      <BackWindow>
        <BackTitle>
          <svg width="9" height="16" viewBox="0 0 9 16">
            <rect x="0" y="2" width="8" height="14" fill="#2c5a2c" />
            <rect x="3" y="4" width="4" height="3" fill="#d8c03c" />
            <rect x="1" y="10" width="5" height="3" fill="#d8c03c" />
          </svg>
          <BackCaps>
            <svg width="10" height="10" viewBox="0 0 10 10" fill="none" stroke="#8a8a8a">
              <rect x="0.5" y="2.5" width="7" height="7" rx="1" />
              <path d="M2.5 2.5V1.5a1 1 0 0 1 1-1h5a1 1 0 0 1 1 1v5a1 1 0 0 1-1 1h-1" />
            </svg>
            <svg width="10" height="10" viewBox="0 0 10 10" stroke="#8a8a8a">
              <path d="M0 0l10 10M10 0L0 10" />
            </svg>
          </BackCaps>
        </BackTitle>
        <BackMenu />
        <BackBody>
          <BackStrip>
            <StripMarks width="9" height="656" viewBox="0 0 9 656">
              <g fill="#555">
                {[80, 87, 93, 100, 112, 118, 125, 132].map((y) => (
                  <circle key={y} cx="6.5" cy={y} r="1.2" />
                ))}
              </g>
              <path d="M6.5 143v22" stroke="#333" strokeWidth="1.5" />
              <path d="M5 321h3M6 361h2M6 432h2M6 443h2M6 526h2M6 565h3M6 636h3" stroke="#666" />
              <path d="M6 555h2M6 582h2M5 618v4" stroke="#444" strokeWidth="1.4" />
            </StripMarks>
            <StripToggle $top={0} />
            <StripToggle $top={130} />
            <StripToggle $top={81} />
            <StripToggle $top={113} />
          </BackStrip>
          <BackCentre />
          <BackPanel>
            <BackHeader $top={70} />
            <TabRow>
              <Tab $w={57} $dx={4}>Objects</Tab>
              <Tab $w={46} $dx={-8}>Nets</Tab>
            </TabRow>
            <LayerFrame>
              <LayerList>
                {BACK_LAYERS.map((l, i) => (
                  <LayerRow key={l} $on={i === 0}>
                    {l}
                  </LayerRow>
                ))}
              </LayerList>
              <LayerTrack>
                <LayerThumb />
              </LayerTrack>
            </LayerFrame>
            <OptionsRow>Options</OptionsRow>
            <BackLabel $x={24} $top={14}>Presets (Ctrl+Tab):</BackLabel>
            <SelectBox $back>
              <Chevron />
            </SelectBox>
            <BackLabel $x={27} $top={4}>Viewports (Shift+Tab):</BackLabel>
            <SelectBox $back>
              <Chevron />
            </SelectBox>
            <BackHeader $top={11} />
            <CheckGrid>
              {BACK_CHECKS.map(([l, on]) => (
                <CheckRow key={l}>
                  <Check $on={on}>{on && <CheckMark />}</Check>
                  {l}
                </CheckRow>
              ))}
            </CheckGrid>
          </BackPanel>
        </BackBody>
        <BackStatus>
          {BACK_STATUS.map(([w, t], i) => (
            <BackCell key={i} $w={w}>
              {t}
            </BackCell>
          ))}
        </BackStatus>
      </BackWindow>

      <Win>
        <TitleBar>
          <TitleIcon />
          <TitleText>3D Viewer</TitleText>
          <CaptionRow>
            <Caption>
              <svg width="10" height="10" viewBox="0 0 10 10" stroke="#111">
                <path d="M0 5.5h10" />
              </svg>
            </Caption>
            <Caption>
              <svg width="10" height="10" viewBox="0 0 10 10" fill="none" stroke="#111">
                <rect x="0.5" y="0.5" width="9" height="9" rx="1" />
              </svg>
            </Caption>
            <Caption>
              <svg width="10" height="10" viewBox="0 0 10 10" stroke="#111">
                <path d="M0 0l10 10M10 0L0 10" />
              </svg>
            </Caption>
          </CaptionRow>
        </TitleBar>
        <MenuBar>
          {["File", "Edit", "View", "Preferences", "Help"].map((m) => (
            <MenuItem key={m}>{m}</MenuItem>
          ))}
        </MenuBar>
        <ToolBar>
          {TOOLS.map((t, i) => (t === null ? <ToolSep key={i} /> : <ToolBtn key={i}>{t}</ToolBtn>))}
          <ToolBtn $on>
            <LayersIcon />
          </ToolBtn>
        </ToolBar>
        <Body>
          <Main>
            <InfoBar>
              <svg width="15" height="14" viewBox="0 0 16 15">
                <path d="M8 0.5L15.5 14.5H0.5z" fill="#fbc02d" stroke="#c99500" strokeWidth="0.8" />
                <path d="M7.2 5h1.6v5H7.2zM7.2 11h1.6v1.8H7.2z" fill="#222" />
              </svg>
              <InfoText>Board outline is missing or malformed. Run DRC for a full analysis.</InfoText>
              <svg width="16" height="16" viewBox="0 0 16 16">
                <rect x="0.5" y="0.5" width="15" height="15" rx="1" fill="#c9b0ae" stroke="#8a2f2c" />
                <rect x="1.5" y="1.5" width="13" height="13" fill="#d7c3c1" />
                <path d="M4 4.5l8 7M12 4.5l-8 7" stroke="#fff" strokeWidth="2.6" />
              </svg>
            </InfoBar>
            <Canvas>
              <Scene />
            </Canvas>
          </Main>
          <Panel>
            <PanelHead>Appearance</PanelHead>
            <PanelScroll>
              <RowList>
                {ROWS.map((g, gi) => (
                  <React.Fragment key={gi}>
                    {gi > 0 && <RowGap />}
                    {g.map((r) => (
                      <Row key={r.l}>
                        <Swatch $fill={r.c} $checker={r.ch} />
                        <Eye off={r.off} />
                        <RowLabel>{r.l}</RowLabel>
                      </Row>
                    ))}
                  </React.Fragment>
                ))}
              </RowList>
              <ScrollTrack>
                <ScrollThumb />
              </ScrollTrack>
            </PanelScroll>
            <StackRow>
              <Check />
              Use board stackup colors
            </StackRow>
            <Footer>
              <FootLabel>Presets (Ctrl+Tab):</FootLabel>
              <SelectBox>
                <span>---</span>
                <Chevron />
              </SelectBox>
              <FootLabel $top={3}>Viewports (Shift+Tab):</FootLabel>
              <SelectBox>
                <span>---</span>
                <Chevron />
              </SelectBox>
            </Footer>
          </Panel>
        </Body>
        <StatusBar>
          <StatusCell $w={644}>Reload time 0.110 s</StatusCell>
          <StatusCell $w={180} />
          <StatusCell $w={140} />
          <StatusCell $w={140} />
        </StatusBar>
        <Grip width="8" height="8" viewBox="0 0 8 8" fill="#c4c4c4">
          <path d="M6 0h2v2H6zM3 3h2v2H3zM6 3h2v2H6zM0 6h2v2H0zM3 6h2v2H3zM6 6h2v2H6z" />
        </Grip>
      </Win>

      <TaskBar>
        <WidgetSlot>
          <svg width="20" height="22" viewBox="0 0 20 22">
            <defs>
              <linearGradient id="orb" x1="0" y1="0" x2="0.6" y2="1">
                <stop offset="0" stopColor="#fbb622" />
                <stop offset="1" stopColor="#ef6a1a" />
              </linearGradient>
            </defs>
            <ellipse cx="10" cy="11" rx="10" ry="11" fill="url(#orb)" />
          </svg>
          <Badge>1</Badge>
        </WidgetSlot>
        {APPS.map((a, i) => (
          <AppBtn key={i}>
            {a.k}
            {a.dot && <RunDot />}
          </AppBtn>
        ))}
        <AppBtn $active>
          <KiTile>Ki</KiTile>
          <RunDot $active />
        </AppBtn>
        <Tray>
          <TrayCell $w={32}>
            <svg width="12" height="8" viewBox="0 0 12 8" fill="none" stroke="#f2f2f2" strokeWidth="1.6">
              <path d="M1 7l5-5.5L11 7" />
            </svg>
          </TrayCell>
          <TrayCell $w={30}>
            <svg width="17" height="12" viewBox="0 0 17 12">
              <path d="M4 12a3.6 3.6 0 0 1-.6-7.2A5 5 0 0 1 12.6 4 4 4 0 0 1 13 12z" fill="#cfcfcf" />
            </svg>
          </TrayCell>
          <TrayCell $w={34}>
            <svg width="18" height="22" viewBox="0 0 18 22" fill="none" stroke="#f0f0f0" strokeWidth="1.3">
              <path d="M2 9a7 7 0 0 1 12-4l1 1M15 1.5V6h-4.5" />
              <path d="M2 13a7 7 0 0 0 5 6M1.5 20v-4.5H6" />
              <circle cx="12" cy="15" r="4" fill="#f58a1f" stroke="none" />
            </svg>
          </TrayCell>
          <TrayCell $w={30}>
            <svg width="16" height="14" viewBox="0 0 16 14" fill="none" stroke="#f0f0f0">
              <rect x="0.5" y="0.5" width="15" height="13" rx="1.5" />
              <path d="M3 4h1M5.5 4h1M8 4h1M10.5 4h1M13 4h.5M3 7h1M5.5 7h1M8 7h1M10.5 7h1M13 7h.5M4 10.5h8" />
            </svg>
          </TrayCell>
          <TrayLang>
            ENG
            <br />
            IN
          </TrayLang>
          <TrayCell $w={24}>
            <svg width="16" height="14" viewBox="0 0 16 14" fill="none" stroke="#f4f4f4" strokeWidth="1.3">
              <path d="M0.8 4.5a10 10 0 0 1 14.4 0M3.2 7a6.6 6.6 0 0 1 9.6 0M5.6 9.5a3.2 3.2 0 0 1 4.8 0" />
              <circle cx="8" cy="12.5" r="1" fill="#f4f4f4" stroke="none" />
            </svg>
          </TrayCell>
          <TrayCell $w={24}>
            <svg width="16" height="14" viewBox="0 0 16 14" fill="none" stroke="#e8e8e8">
              <path d="M0.5 4.5h2.5l4-3.5v12l-4-3.5H0.5z" />
              <path d="M10.5 4.5l5 5M15.5 4.5l-5 5" />
            </svg>
          </TrayCell>
          <TrayCell $w={24}>
            <svg width="16" height="11" viewBox="0 0 16 11" fill="none" stroke="#f0f0f0">
              <rect x="0.5" y="0.5" width="13" height="10" rx="2" />
              <rect x="2" y="2" width="4" height="7" fill="#f0f0f0" stroke="none" />
              <path d="M15 3.5v4" strokeWidth="1.5" />
            </svg>
          </TrayCell>
          <TrayClock>
            15:29
            <br />
            26-04-2024
          </TrayClock>
          <TrayCell $w={26}>
            <svg width="14" height="18" viewBox="0 0 14 18" fill="none" stroke="#f0f0f0" strokeWidth="1.1">
              <path d="M1 13.5c1.5-1.5 1.5-3 1.5-6a4.5 4.5 0 0 1 9 0c0 3 0 4.5 1.5 6z" />
              <path d="M5 15.5a2 2 0 0 0 4 0" />
            </svg>
          </TrayCell>
          <TrayCell $w={45}>
            <svg width="24" height="24" viewBox="0 0 24 24">
              <defs>
                <linearGradient id="cp" x1="0" y1="0" x2="1" y2="1">
                  <stop offset="0" stopColor="#2ec4e8" />
                  <stop offset="0.5" stopColor="#b8d848" />
                  <stop offset="1" stopColor="#d040c8" />
                </linearGradient>
              </defs>
              <path d="M7 0h9c3 0 3 2 4 5l3 9c1 3-1 4-3 4h-4l-2-7-1 5c0 2-2 3-4 3H3c-3 0-3-2-2-5L4 3c.5-2 1.5-3 3-3z" fill="url(#cp)" />
              <rect x="6" y="16" width="18" height="8" rx="2" fill="#f2b200" />
              <text x="15" y="22.7" textAnchor="middle" fontFamily="Liberation Sans, sans-serif" fontSize="7.2" fontWeight="700" fill="#1c1c1c">
                PRE
              </text>
            </svg>
          </TrayCell>
        </Tray>
      </TaskBar>
    </Desktop>
  );
}
